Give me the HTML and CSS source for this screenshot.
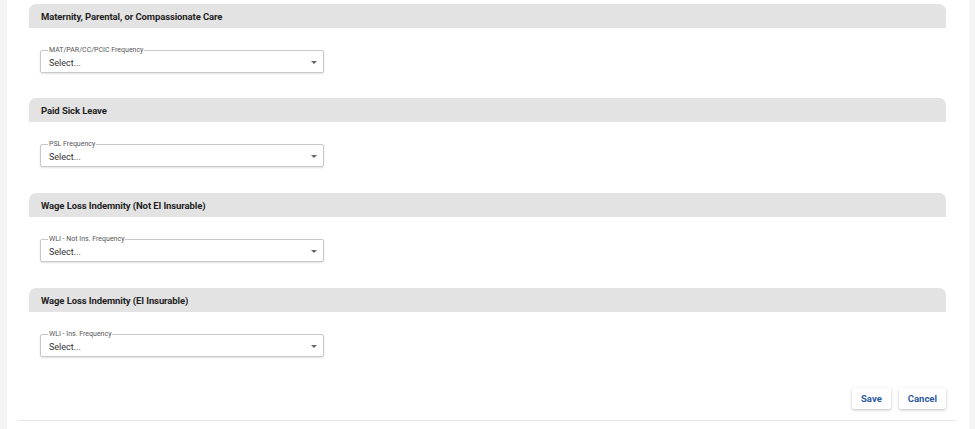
FILE: index.html
```html
<!DOCTYPE html>
<html>
<head>
<meta charset="utf-8">
<link rel="stylesheet" href="styles.css">
</head>
<body>
<div class="panel">
  <section class="sec">
    <div class="sec-head">Maternity, Parental, or Compassionate Care</div>
    <div class="sel">
      <span class="lbl">MAT/PAR/CC/PCIC Frequency</span>
      <span class="val">Select...</span>
      <span class="caret"></span>
    </div>
  </section>
  <section class="sec">
    <div class="sec-head">Paid Sick Leave</div>
    <div class="sel">
      <span class="lbl">PSL Frequency</span>
      <span class="val">Select...</span>
      <span class="caret"></span>
    </div>
  </section>
  <section class="sec">
    <div class="sec-head">Wage Loss Indemnity (Not EI Insurable)</div>
    <div class="sel">
      <span class="lbl">WLI - Not Ins. Frequency</span>
      <span class="val">Select...</span>
      <span class="caret"></span>
    </div>
  </section>
  <section class="sec">
    <div class="sec-head">Wage Loss Indemnity (EI Insurable)</div>
    <div class="sel">
      <span class="lbl">WLI - Ins. Frequency</span>
      <span class="val">Select...</span>
      <span class="caret"></span>
    </div>
  </section>
  <div class="actions">
    <button class="btn">Save</button>
    <button class="btn">Cancel</button>
  </div>
  <div class="rule"></div>
</div>
</body>
</html>
```

FILE: styles.css
```css
html, body {
  margin: 0;
  padding: 0;
  height: 100%;
  background: #f4f4f4;
  font-family: Roboto, "Liberation Sans", sans-serif;
}
.panel {
  margin: 0 6px 0 7px;
  height: 429px;
  background: #ffffff;
  padding: 4px 23px 0 22px;
  box-sizing: border-box;
  display: flex;
  flex-direction: column;
}
.sec {
  display: flex;
  flex-direction: column;
  height: 95px;
  flex: none;
}
.sec:first-child {
  height: 94px;
}
.sec-head {
  height: 24px;
  background: #e3e3e3;
  border-radius: 7px 7px 0 0;
  padding-left: 12px;
  display: flex;
  align-items: center;
  font-size: 9.5px;
  font-weight: 700;
  color: #1f1f1f;
  letter-spacing: -0.1px;
}
.sel {
  position: relative;
  margin: 22px 0 0 11px;
  width: 284px;
  height: 23px;
  box-sizing: border-box;
  border: 1px solid #c8c8c8;
  border-radius: 2px;
  box-shadow: 0 1px 2px rgba(0,0,0,0.12);
  padding: 2px 6px 0 8px;
  display: flex;
  align-items: center;
  justify-content: space-between;
}
.lbl {
  position: absolute;
  left: 7px;
  top: -5px;
  background: #fff;
  padding: 0 1px;
  font-size: 7px;
  line-height: 8px;
  color: #555;
}
.val {
  font-size: 9px;
  color: #333;
}
.caret {
  width: 0;
  height: 0;
  border-left: 3px solid transparent;
  border-right: 3px solid transparent;
  border-top: 3px solid #666;
}
.actions {
  display: flex;
  justify-content: flex-end;
  gap: 8px;
  margin-top: 5px;
}
.btn {
  height: 21px;
  padding: 0 9px;
  border: none;
  background: #fff;
  border-radius: 2px;
  box-shadow: 0 1px 3px rgba(0,0,0,0.25);
  font-family: Roboto, "Liberation Sans", sans-serif;
  font-size: 9.5px;
  font-weight: 700;
  color: #2b5aa0;
}
.rule {
  margin: 11px -11px 0 -11px;
  border-top: 1px solid #e6e6e6;
}
```
